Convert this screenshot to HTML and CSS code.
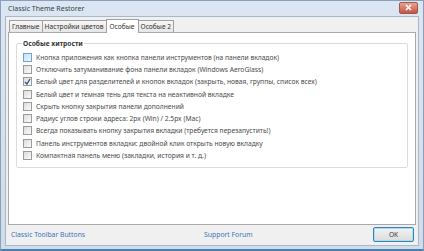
FILE: index.html
```html
<!DOCTYPE html>
<html lang="ru">
<head>
    <meta charset="UTF-8">
    <title>Classic Theme Restorer</title>
    <link rel="stylesheet" href="styles.css">
</head>
<body>
    <div class="window">
        <div class="titlebar">
            <span class="title">Classic Theme Restorer</span>
            <span class="close">
                <svg width="9" height="7" viewBox="0 0 9 7"><path d="M2 1 L7 6 M7 1 L2 6" stroke="#fff" stroke-width="1.6"/></svg>
            </span>
        </div>
        <div class="client">
            <div class="tabs">
                <div class="tab">Главные</div>
                <div class="tab">Настройки цветов</div>
                <div class="tab active">Особые</div>
                <div class="tab">Особые 2</div>
            </div>
            <div class="panel">
                <fieldset class="group">
                    <legend>Особые хитрости</legend>
                    <label class="row"><span class="box hover"></span>Кнопка приложения как кнопка панели инструментов (на панели вкладок)</label>
                    <label class="row"><span class="box"></span>Отключить затуманивание фона панели вкладок (Windows AeroGlass)</label>
                    <label class="row"><span class="box checked"><svg width="7" height="7" viewBox="0 0 7 7"><path d="M1 4 L3 6 L6 1" stroke="#2b4c8c" stroke-width="1.3" fill="none"/></svg></span>Белый цвет для разделителей и кнопок вкладок (закрыть, новая, группы, список всех)</label>
                    <label class="row"><span class="box"></span>Белый цвет и темная тень для текста на неактивной вкладке</label>
                    <label class="row"><span class="box"></span>Скрыть кнопку закрытия панели дополнений</label>
                    <label class="row"><span class="box"></span>Радиус углов строки адреса: 2px (Win) / 2.5px (Mac)</label>
                    <label class="row"><span class="box"></span>Всегда показывать кнопку закрытия вкладки (требуется перезапустить!)</label>
                    <label class="row"><span class="box"></span>Панель инструментов вкладки: двойной клик открыть новую вкладку</label>
                    <label class="row"><span class="box"></span>Компактная панель меню (закладки, история и т. д.)</label>
                </fieldset>
            </div>
            <div class="footer">
                <a class="link" href="#">Classic Toolbar Buttons</a>
                <a class="link forum" href="#">Support Forum</a>
                <button class="ok">OK</button>
            </div>
        </div>
    </div>
</body>
</html>
```

FILE: styles.css
```css
html, body {
    margin: 0;
    padding: 0;
}
body {
    font-family: 'Noto Sans', 'DejaVu Sans', sans-serif;
    font-size: 6.7px;
    color: #444;
    background: #c9d7e6;
}
.window {
    width: 424px;
    height: 251px;
    box-sizing: border-box;
    background: linear-gradient(#dbe6f2, #cfdcea);
    border: 1px solid #8ba0b8;
    border-bottom: 2px solid #4a7fb0;
    padding: 0 4px 3px 4px;
    display: flex;
    flex-direction: column;
}
.titlebar {
    height: 15px;
    display: flex;
    align-items: center;
    justify-content: space-between;
}
.title {
    font-size: 7px;
    color: #33414f;
    padding-left: 3px;
}
.close {
    width: 17px;
    height: 10px;
    margin-right: 1px;
    margin-top: -2px;
    background: linear-gradient(#e8a393, #c9533e);
    border: 1px solid #9a5a4e;
    border-radius: 2px;
    display: flex;
    align-items: center;
    justify-content: center;
}
.client {
    flex: 1;
    background: #f0f0f0;
    border: 1px solid #a8b8c8;
    display: flex;
    flex-direction: column;
    padding: 2px 2px 0 2px;
}
.tabs {
    display: flex;
    align-items: flex-end;
    height: 13px;
    padding-left: 1px;
}
.tab {
    height: 11px;
    line-height: 11px;
    padding: 0 2px;
    border: 1px solid #a0a0a0;
    border-bottom: none;
    border-right: none;
    background: linear-gradient(#f7f7f7, #e6e6e6);
    color: #333;
}
.tab:nth-child(4) {
    border-right: 1px solid #a0a0a0;
}
.tab.active {
    height: 13px;
    line-height: 13px;
    background: #fff;
    border-right: 1px solid #a0a0a0;
    position: relative;
    top: 1px;
    padding: 0 3px;
}
.tab.active + .tab {
    border-left: none;
}
.panel {
    height: 185px;
    background: #fff;
    border: 1px solid #a9a9a9;
    padding: 6px 7px 0 7px;
}
.group {
    margin: 0;
    border: 1px solid #dcdcdc;
    border-radius: 2px;
    padding: 3px 6px 5px 6px;
}
.group legend {
    font-weight: bold;
    color: #333;
    padding: 0 1px;
    margin-left: -1px;
}
.row {
    display: flex;
    align-items: center;
    height: 12.3px;
    color: #4a4a4a;
}
.box {
    width: 7px;
    height: 7px;
    border: 1px solid #9a9b9b;
    background: linear-gradient(135deg, #dcdcdc, #fbfbfb);
    margin-right: 4px;
    display: flex;
    align-items: center;
    justify-content: center;
}
.box.hover {
    border-color: #6aa5da;
    background: linear-gradient(135deg, #c6e2f8, #eef7fe);
}
.footer {
    flex: 1;
    display: flex;
    align-items: center;
    padding: 0 2px 2px 3px;
}
.link {
    color: #3a74bb;
    text-decoration: none;
    font-size: 6.8px;
}
.forum {
    margin-left: 119px;
}
.ok {
    margin-left: auto;
    width: 41px;
    height: 15px;
    font-family: inherit;
    font-size: 6.6px;
    color: #333;
    background: linear-gradient(#f3f3f3, #dcdcdc);
    border: 1px solid #3c7fb1;
    border-radius: 2px;
    box-shadow: inset 0 0 0 1px #a6e0f7;
    padding: 0;
}
```
